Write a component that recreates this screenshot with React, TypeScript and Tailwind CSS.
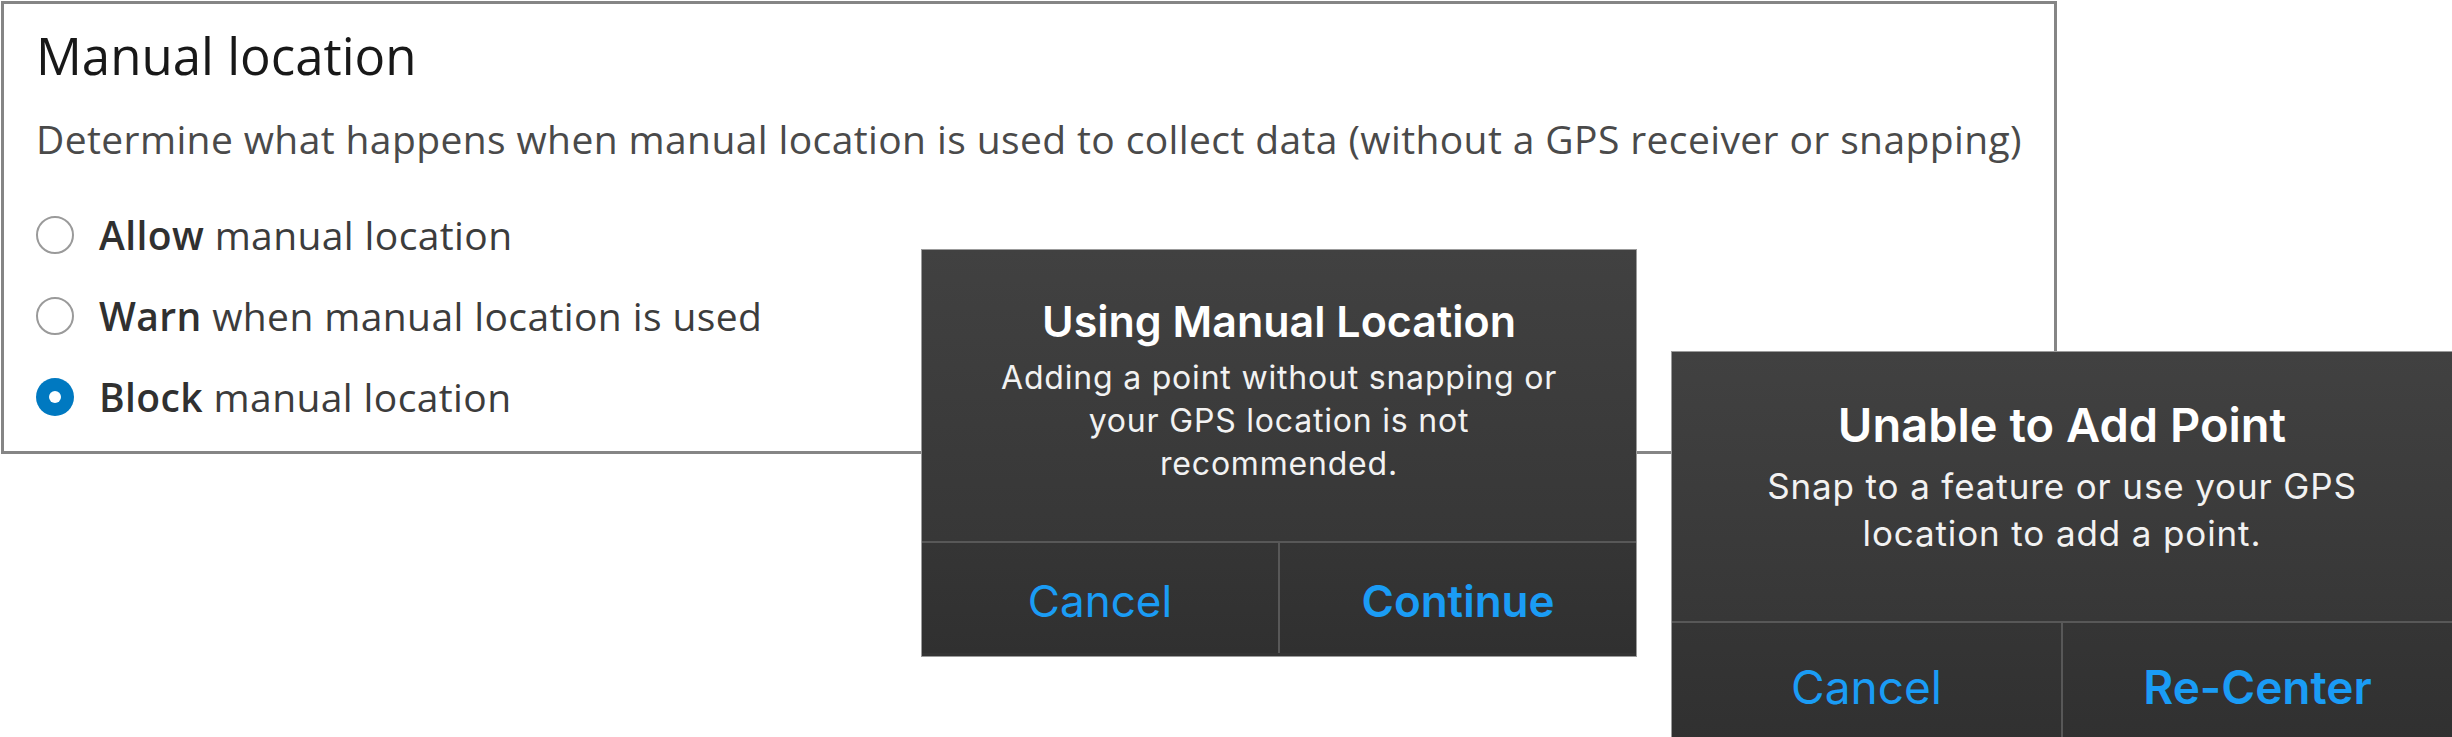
import type { ReactNode } from 'react';

type AlertSize = 'md' | 'lg';

// Class sets for the two alert sizes drawn over the settings card.
const alertSizes: Record<
  AlertSize,
  { box: string; body: string; title: string; message: string; row: string; button: string }
> = {
  md: {
    box: 'left-[921px] top-[249px] w-[716px] h-[408px]',
    body: 'h-[291px] pt-[47px] px-8',
    title: 'text-[43px] leading-[48px]',
    message: 'mt-[11px] text-[32px] leading-[43px] tracking-[0.025em]',
    row: 'h-[112px]',
    button: 'text-[44px] pt-[6px]',
  },
  lg: {
    box: 'left-[1671px] top-[351px] w-[782px] h-[400px]',
    body: 'h-[269px] pt-[47px] px-8',
    title: 'text-[47px] leading-[52px]',
    message: 'mt-[12px] text-[35px] leading-[47px] tracking-[0.025em]',
    row: 'h-[127px]',
    button: 'text-[46px] pt-[3px]',
  },
};

function Radio({ checked }: { checked?: boolean }) {
  if (checked) {
    return (
      <span className="flex h-[38px] w-[38px] shrink-0 items-center justify-center rounded-full bg-[#0079c1]">
        <span className="h-[12px] w-[12px] rounded-full bg-white" />
      </span>
    );
  }
  return (
    <span className="h-[38px] w-[38px] shrink-0 rounded-full border-2 border-[#9a9a9a] bg-white" />
  );
}

function Option({ lead, rest, checked }: { lead: string; rest: string; checked?: boolean }) {
  return (
    <label className="flex h-12 items-center gap-[25px]">
      <Radio checked={checked} />
      <span className="text-[39px] leading-[48px] tracking-[0.01em] text-[#3c3c3c]">
        <b className="font-semibold text-[#303030]">{lead}</b> {rest}
      </span>
    </label>
  );
}

function Alert({
  size,
  title,
  message,
  cancel,
  action,
}: {
  size: AlertSize;
  title: string;
  message: ReactNode;
  cancel: string;
  action: string;
}) {
  const s = alertSizes[size];
  return (
    <div
      className={`absolute flex flex-col border border-[#9b9b9b] bg-[#343434] font-['Inter',sans-serif] ${s.box}`}
    >
      <div
        className={`flex flex-col items-center bg-gradient-to-b from-[#414141] to-[#373737] text-center text-white ${s.body}`}
      >
        <h3 className={`font-semibold ${s.title}`}>{title}</h3>
        <p className={`font-normal text-[#f2f2f2] ${s.message}`}>{message}</p>
      </div>
      <div className={`flex border-t-2 border-[#585858] bg-gradient-to-b from-[#353535] to-[#303030] ${s.row}`}>
        <button
          type="button"
          className={`flex flex-1 items-center justify-center border-r-2 border-[#585858] font-normal text-[#1a9cf5] ${s.button}`}
        >
          {cancel}
        </button>
        <button
          type="button"
          className={`flex flex-1 items-center justify-center font-semibold text-[#1a9cf5] ${s.button}`}
        >
          {action}
        </button>
      </div>
    </div>
  );
}

export default function App() {
  return (
    <div className="relative h-[737px] w-[2452px] overflow-hidden bg-white font-['Open_Sans',sans-serif]">
      <div className="pl-px pt-px">
        <section className="w-[2056px] border-[3px] border-[#858585] bg-white pb-[30px] pl-8 pt-[21px]">
          <h2 className="text-[51px] leading-[60px] text-[#181818]">Manual location</h2>
          <p className="mt-[30px] text-[39px] leading-[48px] tracking-[0.01em] text-[#4a4a4a]">
            Determine what happens when manual location is used to collect data (without a GPS
            receiver or snapping)
          </p>
          <div className="mt-12 flex flex-col gap-[33px]">
            <Option lead="Allow" rest="manual location" />
            <Option lead="Warn" rest="when manual location is used" />
            <Option lead="Block" rest="manual location" checked />
          </div>
        </section>
      </div>

      <Alert
        size="md"
        title="Using Manual Location"
        message={
          <>
            Adding a point without snapping or
            <br />
            your GPS location is not
            <br />
            recommended.
          </>
        }
        cancel="Cancel"
        action="Continue"
      />
      <Alert
        size="lg"
        title="Unable to Add Point"
        message={
          <>
            Snap to a feature or use your GPS
            <br />
            location to add a point.
          </>
        }
        cancel="Cancel"
        action="Re-Center"
      />
    </div>
  );
}
